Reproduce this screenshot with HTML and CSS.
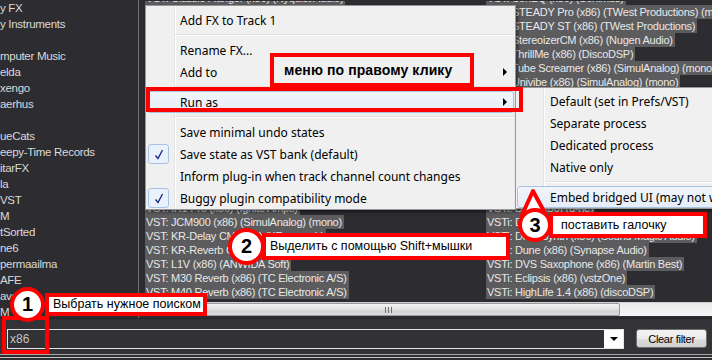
FILE: index.html
```html
<!DOCTYPE html>
<html>
<head>
<meta charset="utf-8">
<title>FX browser - Run as</title>
<link rel="stylesheet" href="styles.css">
</head>
<body>
<div id="browser">
	<div id="mainArea">
		<div id="tree">
			<div class="nodes">
				<div class="node">y FX</div>
				<div class="node">y Instruments</div>
				<div class="node">&nbsp;</div>
				<div class="node">mputer Music</div>
				<div class="node">elda</div>
				<div class="node">xengo</div>
				<div class="node">aerhus</div>
				<div class="node">&nbsp;</div>
				<div class="node">ueCats</div>
				<div class="node">eepy-Time Records</div>
				<div class="node">itarFX</div>
				<div class="node">la</div>
				<div class="node">VST</div>
				<div class="node">M</div>
				<div class="node">tSorted</div>
				<div class="node">ne6</div>
				<div class="node">permaailma</div>
				<div class="node">AFE</div>
				<div class="node">ave</div>
				<div class="node">M</div>
			</div>
		</div>
		<div id="listPane">
			<div id="fxList">
				<div class="cols">
					<div class="col">
						<div class="item"><span>VST: Classic Flanger (x86) (Nyquist Audio)</span></div>
						<div class="item"><span>VST: Classic Phaser (x86) (Nyquist Audio)</span></div>
						<div class="item"><span>VST: Density mkIII (x86) (Variety Of Sound)</span></div>
						<div class="item"><span>VST: Dragonfly Reverb (x86) (Michael Willis)</span></div>
						<div class="item"><span>VST: Epicverb (x86) (Variety Of Sound)</span></div>
						<div class="item"><span>VST: Ferox (x86) (Variety Of Sound)</span></div>
						<div class="item"><span>VST: FerricTDS (x86) (Variety Of Sound)</span></div>
						<div class="item"><span>VST: FlyingDelay (x86) (Variety Of Sound)</span></div>
						<div class="item"><span>VST: FreeG (x86) (Sonalksis)</span></div>
						<div class="item"><span>VST: GlissEQ (x86) (Voxengo)</span></div>
						<div class="item"><span>VST: Guitar Rig 5 (x86) (Native Instruments)</span></div>
						<div class="item"><span>VST: HG-2 (x86) (Brainworx)</span></div>
						<div class="item"><span>VST: HY-MBMFX (x86) (HY-Plugins)</span></div>
						<div class="item"><span>VST: IL Delay (x86) (Image-Line)</span></div>
						<div class="item"><span>VST: Invisible Limiter (x86) (SSL)</span></div>
						<div class="item"><span>VST: IR1 Pro (x86) (Ignite Amps)</span></div>
						<div class="item"><span>VST: JCM900 (x86) (SimulAnalog) (mono)</span></div>
						<div class="item"><span>VST: KR-Delay CM (x86) (KResearch)</span></div>
						<div class="item"><span>VST: KR-Reverb CM (x86) (KResearch)</span></div>
						<div class="item"><span>VST: L1V (x86) (ANWIDA Soft)</span></div>
						<div class="item"><span>VST: M30 Reverb (x86) (TC Electronic A/S)</span></div>
						<div class="item"><span>VST: M40 Reverb (x86) (TC Electronic A/S)</span></div>
					</div>
					<div class="col">
						<div class="item"><span>VST: SonEQ (x86) (Sonimus)</span></div>
						<div class="item"><span>VST: STEADY Pro (x86) (TWest Productions) (mono)</span></div>
						<div class="item"><span>VST: STEADY ST (x86) (TWest Productions)</span></div>
						<div class="item"><span>VST: StereoizerCM (x86) (Nugen Audio)</span></div>
						<div class="item"><span>VST: ThrillMe (x86) (DiscoDSP)</span></div>
						<div class="item"><span>VST: Tube Screamer (x86) (SimulAnalog) (mono)</span></div>
						<div class="item"><span>VST: Univibe (x86) (SimulAnalog) (mono)</span></div>
						<div class="item"><span>VST: ValhallaRoom (x86) (Valhalla DSP)</span></div>
						<div class="item"><span>VST: ValhallaShimmer (x86) (Valhalla DSP)</span></div>
						<div class="item"><span>VST: W1 Limiter (x86) (George Yohng)</span></div>
						<div class="item"><span>VSTi: 4Front Piano (x86) (4Front)</span></div>
						<div class="item"><span>VSTi: Charlatan (x86) (Blaukraut)</span></div>
						<div class="item"><span>VSTi: Crystal (x86) (Green Oak)</span></div>
						<div class="item"><span>VSTi: DAW Cassette (x86) (Sonimus)</span></div>
						<div class="item"><span>VSTi: Dexed (x86) (Digital Suburban)</span></div>
						<div class="item"><span>VSTi: Diva (x86) (u-he)</span></div>
						<div class="item"><span>VSTi: Drumatic 3 (x86) (e-phonic)</span></div>
						<div class="item"><span>VSTi: DrumSynth (x86) (Sound Magic Audio)</span></div>
						<div class="item"><span>VSTi: Dune (x86) (Synapse Audio)</span></div>
						<div class="item"><span>VSTi: DVS Saxophone (x86) (Martin Best)</span></div>
						<div class="item"><span>VSTi: Eclipsis (x86) (vstzOne)</span></div>
						<div class="item"><span>VSTi: HighLife 1.4 (x86) (discoDSP)</span></div>
					</div>
				</div>
			</div>
			<div id="hscroll"><div class="thumb"><span class="grip"></span></div></div>
		</div>
	</div>
	<div id="filterBar">
		<div id="filterCombo">
			<input id="filterText" type="text" value="x86">
			<span class="dropBtn"><span class="dropArrow"></span></span>
		</div>
		<button id="clearButton">Clear filter</button>
	</div>
	<div id="frameEdge"></div>
</div>

<!-- right click menu -->
<div id="ctxMenu" class="menu">
	<div class="mi"><span class="ico"></span><span class="lbl">Add FX to Track 1</span></div>
	<div class="sep"></div>
	<div class="mi"><span class="ico"></span><span class="lbl">Rename FX...</span></div>
	<div class="mi"><span class="ico"></span><span class="lbl">Add to</span><span class="arr"></span></div>
	<div class="sep"></div>
	<div class="mi hot"><span class="ico"></span><span class="lbl">Run as</span><span class="arr"></span></div>
	<div class="sep"></div>
	<div class="mi"><span class="ico"></span><span class="lbl">Save minimal undo states</span></div>
	<div class="mi"><span class="ico checked"><svg width="10" height="11" viewBox="0 0 10 11"><path d="M1.5 6.5 L4 9.5 L8.5 1" fill="none" stroke="#1c2f8c" stroke-width="1.4"/></svg></span><span class="lbl">Save state as VST bank (default)</span></div>
	<div class="mi"><span class="ico"></span><span class="lbl">Inform plug-in when track channel count changes</span></div>
	<div class="mi"><span class="ico checked"><svg width="10" height="11" viewBox="0 0 10 11"><path d="M1.5 6.5 L4 9.5 L8.5 1" fill="none" stroke="#1c2f8c" stroke-width="1.4"/></svg></span><span class="lbl">Buggy plugin compatibility mode</span></div>
</div>

<!-- "Run as" submenu -->
<div id="runMenu" class="menu">
	<div class="mi"><span class="ico"></span><span class="lbl">Default (set in Prefs/VST)</span></div>
	<div class="mi"><span class="ico"></span><span class="lbl">Separate process</span></div>
	<div class="mi"><span class="ico"></span><span class="lbl">Dedicated process</span></div>
	<div class="mi"><span class="ico"></span><span class="lbl">Native only</span></div>
	<div class="sep"></div>
	<div class="mi hot"><span class="ico"></span><span class="lbl">Embed bridged UI (may not work with all plug-ins)</span></div>
</div>

<!-- annotations -->
<div id="markMenu" class="mark">меню по правому клику</div>
<div id="markRunAs" class="mark"></div>
<div id="markSearch" class="mark"></div>

<div id="note1" class="callout"><span class="num">1</span><span class="txt">Выбрать нужное поиском</span></div>
<div id="note2" class="callout"><span class="num">2</span><span class="txt">Выделить с помощью Shift+мышки</span></div>
<svg id="pointer3" width="34" height="32" viewBox="0 0 34 32"><polygon points="15,4 4,28 28,28" fill="#fff" stroke="#ff0000" stroke-width="4" stroke-linejoin="round"/></svg>
<div id="note3" class="callout"><span class="num">3</span><span class="txt">поставить галочку</span></div>
</body>
</html>
```

FILE: styles.css
```css
/* FX browser with right click menu and annotations */

* {
	box-sizing: border-box;
}
html, body {
	margin: 0;
	padding: 0;
}
body {
	width: 712px;
	height: 360px;
	overflow: hidden;
	position: relative;
	background: #2e2d31;
	font-family: "Liberation Sans", Arial, sans-serif;
}

/* Browser window */
#browser {
	display: flex;
	flex-direction: column;
	height: 360px;
}
#mainArea {
	display: flex;
	height: 318px;
}

/* Folder tree (left) */
#tree {
	width: 139px;
	flex: none;
	overflow: hidden;
	border-right: 1px solid #707070;
	background: #2d2c30;
}
#tree .nodes {
	padding-top: 1px;
}
.node {
	height: 16px;
	line-height: 14px;
	font-size: 11.5px;
	letter-spacing: -0.3px;
	color: #dadada;
	white-space: nowrap;
}

/* Plug-in list (right) */
#listPane {
	flex: 1;
	display: flex;
	flex-direction: column;
	overflow: hidden;
	background: #2d2c30;
}
#fxList {
	height: 302px;
	overflow: hidden;
	padding-left: 6px;
	border-top: 1px solid transparent;
}
.cols {
	display: flex;
	margin-top: -13px;
}
.col {
	width: 341px;
	flex: none;
}
.item {
	height: 14px;
	white-space: nowrap;
}
.item span {
	display: inline-block;
	height: 14px;
	line-height: 14px;
	padding: 0 2px 0 1px;
	font-size: 11px;
	letter-spacing: -0.25px;
	color: #e8e8e8;
	background: #5c5c5e;
}

/* Horizontal scrollbar */
#hscroll {
	height: 14px;
	margin-left: 4px;
	background: linear-gradient(#e9e9e9, #f6f6f6);
	border-top: 1px solid #d0d0d0;
}
#hscroll .thumb {
	width: 477px;
	height: 13px;
	display: flex;
	justify-content: center;
	align-items: center;
	border: 1px solid #9a9a9a;
	border-radius: 2px;
	background: linear-gradient(#f2f2f2, #e2e2e2 50%, #d2d2d2 51%, #dadada);
}
#hscroll .grip {
	width: 7px;
	height: 6px;
	background: repeating-linear-gradient(to right, #6e6e6e 0, #6e6e6e 1px, transparent 1px, transparent 3px);
	margin-left: 14px;
}

/* Filter bar */
#filterBar {
	height: 36px;
	display: flex;
	align-items: flex-start;
	padding: 10px 0 0 7px;
	border-top: 1px solid #252427;
	background: #333236;
}
#filterCombo {
	width: 617px;
	height: 20px;
	display: flex;
	border: 1px solid #e4e4e4;
	background: #323135;
}
#filterText {
	flex: 1;
	min-width: 0;
	border: none;
	outline: none;
	background: transparent;
	color: #c4c4c4;
	font-family: "Liberation Sans", Arial, sans-serif;
	font-size: 12px;
	padding: 0 2px;
}
.dropBtn {
	width: 19px;
	display: flex;
	justify-content: center;
	align-items: center;
	background: #ffffff;
}
.dropArrow {
	border-top: 4px solid #000;
	border-left: 4px solid transparent;
	border-right: 4px solid transparent;
}
#clearButton {
	margin-left: 12px;
	width: 71px;
	height: 19px;
	padding: 0;
	border: 1px solid #707070;
	border-radius: 3px;
	background: linear-gradient(#f3f3f3, #ebebeb 50%, #dddddd 51%, #cfcfcf);
	font-family: "Liberation Sans", Arial, sans-serif;
	font-size: 11px;
	letter-spacing: -0.3px;
	color: #000;
}
#frameEdge {
	height: 6px;
	border-top: 1px solid #a8a8a8;
	background: linear-gradient(#2e2d31 2px, #c4c4c4 2px, #c4c4c4 3px, #2e2d31 3px);
}

/* Popup menus */
.menu {
	position: absolute;
	padding: 3px 1px 0 1px;
	border: 1px solid #979797;
	background: linear-gradient(to right, transparent 28px, #e2e3e3 28px, #e2e3e3 29px, #ffffff 29px, #ffffff 30px, transparent 30px) #f0f0f0;
	box-shadow: 2px 2px 3px rgba(0, 0, 0, 0.5);
	font-family: "Noto Sans", "Open Sans", sans-serif;
	font-size: 12px;
	color: #000;
}
#ctxMenu {
	left: 145px;
	top: 5px;
	width: 371px;
	height: 205px;
}
#runMenu {
	left: 515px;
	top: 87px;
	width: 230px;
	height: 122px;
	padding-top: 2px;
	background: linear-gradient(to right, transparent 27px, #e2e3e3 27px, #e2e3e3 28px, #ffffff 28px, #ffffff 29px, transparent 29px) #f0f0f0;
}
.mi {
	display: flex;
	align-items: center;
	height: 22px;
	border: 1px solid transparent;
	border-radius: 3px;
	white-space: nowrap;
}
.mi.hot {
	border-color: #a9c3e2;
	background: linear-gradient(#f1f5fb, #e6edf7);
}
.ico {
	width: 21px;
	height: 20px;
	flex: none;
	display: flex;
	justify-content: center;
	align-items: center;
}
.ico.checked {
	border: 1px solid #a7c4e6;
	border-radius: 3px;
	background: #eaf1fa;
}
.lbl {
	margin-left: 11px;
}
.arr {
	margin-left: auto;
	margin-right: 6px;
	border-left: 4px solid #000;
	border-top: 4px solid transparent;
	border-bottom: 4px solid transparent;
}
.sep {
	height: 8px;
	margin-left: 28px;
	background: linear-gradient(transparent 3px, #e0e0e0 3px, #e0e0e0 4px, #ffffff 4px, #ffffff 5px, transparent 5px);
}

/* Red annotation frames */
.mark {
	position: absolute;
	border: 4px solid #ff0000;
}
#markMenu {
	left: 270px;
	top: 53px;
	width: 204px;
	height: 34px;
	padding-left: 10px;
	line-height: 26px;
	background: #f0f0f0;
	font-family: "Liberation Sans", Arial, sans-serif;
	font-size: 14px;
	font-weight: bold;
	letter-spacing: 0.1px;
	color: #000;
}
#markRunAs {
	left: 146px;
	top: 87px;
	width: 377px;
	height: 25px;
}
#markSearch {
	left: 2px;
	top: 316px;
	width: 47px;
	height: 38px;
}

/* Numbered callouts */
.callout {
	position: absolute;
	display: flex;
	justify-content: flex-start;
	align-items: center;
}
.callout .num {
	position: relative;
	z-index: 1;
	flex: none;
	display: flex;
	justify-content: center;
	align-items: center;
	border: 4px solid #ff0000;
	border-radius: 50%;
	background: #fff;
	font-family: "Liberation Sans", Arial, sans-serif;
	font-size: 20px;
	font-weight: bold;
	color: #000;
}
.callout .txt {
	flex: none;
	display: block;
	border: 4px solid #ff0000;
	background: #fff;
	font-family: "Liberation Sans", Arial, sans-serif;
	font-size: 12.5px;
	text-align: left;
	color: #000;
	white-space: nowrap;
}
#note1 {
	left: 10px;
	top: 287px;
}
#note1 .num {
	width: 35px;
	height: 35px;
}
#note1 .txt {
	width: 162px;
	height: 23px;
	line-height: 15px;
	padding-left: 4px;
}
#note2 {
	left: 228px;
	top: 228px;
}
#note2 .num {
	width: 37px;
	height: 37px;
}
#note2 .txt {
	width: 248px;
	height: 27px;
	line-height: 19px;
	margin-left: -3px;
	padding-left: 4px;
}
#pointer3 {
	position: absolute;
	left: 518px;
	top: 187px;
}
#note3 {
	left: 518px;
	top: 208px;
}
#note3 .num {
	width: 34px;
	height: 34px;
}
#note3 .txt {
	width: 158px;
	height: 26px;
	line-height: 18px;
	margin-left: -3px;
	padding-left: 8px;
}
```
